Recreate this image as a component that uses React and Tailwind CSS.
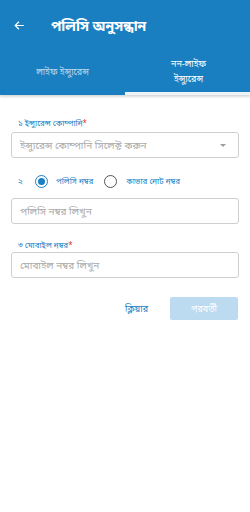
import React, { useState } from "react";

const Field = ({ placeholder }) => (
  <div className="mx-[11px] h-[26px] rounded-[3px] border border-[#cfcfcf] flex items-center px-[8px]">
    <span className="text-[10px] text-[#aaaaaa]">{placeholder}</span>
  </div>
);

const Radio = ({ checked }) => (
  <span
    className={
      "w-[13px] h-[13px] rounded-full border-[1.5px] flex items-center justify-center " +
      (checked ? "border-[#1a7fc4]" : "border-[#555]")
    }
  >
    {checked && <span className="w-[7px] h-[7px] rounded-full bg-[#1a7fc4]"></span>}
  </span>
);

export default function App() {
  const [tab] = useState(1);
  return (
    <div
      className="w-[250px] h-[512px] bg-white"
      style={{ fontFamily: '"Noto Sans", "Noto Sans Bengali", sans-serif' }}
    >
      <header className="bg-[#1a7fc1] shadow-[0_2px_2px_rgba(0,0,0,0.15)]">
        <div className="h-[50px] flex items-center">
          <svg
            className="ml-[13px]"
            width="13"
            height="13"
            viewBox="0 0 24 24"
            fill="none"
            stroke="white"
            strokeWidth="2.2"
          >
            <path d="M20 12H4M11 5l-7 7 7 7" />
          </svg>
          <h1 className="ml-[25px] text-[14px] font-bold text-white">পলিসি অনুসন্ধান</h1>
        </div>
        <div className="flex h-[45px]">
          <div className="flex-1 flex flex-col">
            <div className="flex-1 flex items-center justify-center text-[9px] text-white/70 pt-[2px]">
              লাইফ ইন্স্যুরেন্স
            </div>
            <div className={"h-[3px] " + (tab === 0 ? "bg-white" : "")}></div>
          </div>
          <div className="flex-1 flex flex-col">
            <div className="flex-1 flex items-center justify-center text-center text-[9px] leading-[15px] text-white pl-[2px]">
              নন-লাইফ
              <br />
              ইন্স্যুরেন্স
            </div>
            <div className={"h-[3px] " + (tab === 1 ? "bg-[#eef3f8]" : "")}></div>
          </div>
        </div>
      </header>

      <div className="pt-[22px]">
        <div className="ml-[18px] text-[8px] text-[#1a7fc4] mb-[3px]">
          ১ ইন্স্যুরেন্স কোম্পানি<span className="text-[#e53935]">*</span>
        </div>
        <div className="mx-[11px] h-[26px] rounded-[3px] border border-[#cfcfcf] flex items-center justify-between px-[8px]">
          <span className="text-[10px] text-[#aaaaaa]">ইন্স্যুরেন্স কোম্পানি সিলেক্ট করুন</span>
          <svg width="8" height="5" viewBox="0 0 8 5" className="mr-[3px]">
            <path d="M1 1h6L4 4z" fill="#9e9e9e" />
          </svg>
        </div>

        <div className="flex items-center mt-[16px] ml-[18px] h-[14px]">
          <span className="text-[8px] text-[#1a7fc4] w-[17px]">২</span>
          <Radio checked />
          <span className="ml-[8px] text-[8px] text-[#1a7fc4]">পলিসি নম্বর</span>
          <span className="ml-[11px]">
            <Radio />
          </span>
          <span className="ml-[9px] text-[8px] text-[#1a7fc4]">কাভার নোট নম্বর</span>
        </div>

        <div className="mt-[10px]">
          <Field placeholder="পলিসি নম্বর লিখুন" />
        </div>

        <div className="ml-[18px] mt-[15px] text-[8px] text-[#1a7fc4] mb-[1px]">
          ৩ মোবাইল নম্বর<span className="text-[#e53935]">*</span>
        </div>
        <Field placeholder="মোবাইল নম্বর লিখুন" />

        <div className="flex items-center justify-end mt-[19px] mr-[12px]">
          <button className="text-[9px] text-[#1a7fc4] mr-[22px]">ক্লিয়ার</button>
          <button className="w-[68px] h-[23px] rounded-[2px] bg-[#bcdaf0] text-[9px] text-white">
            পরবর্তী
          </button>
        </div>
      </div>
    </div>
  );
}
